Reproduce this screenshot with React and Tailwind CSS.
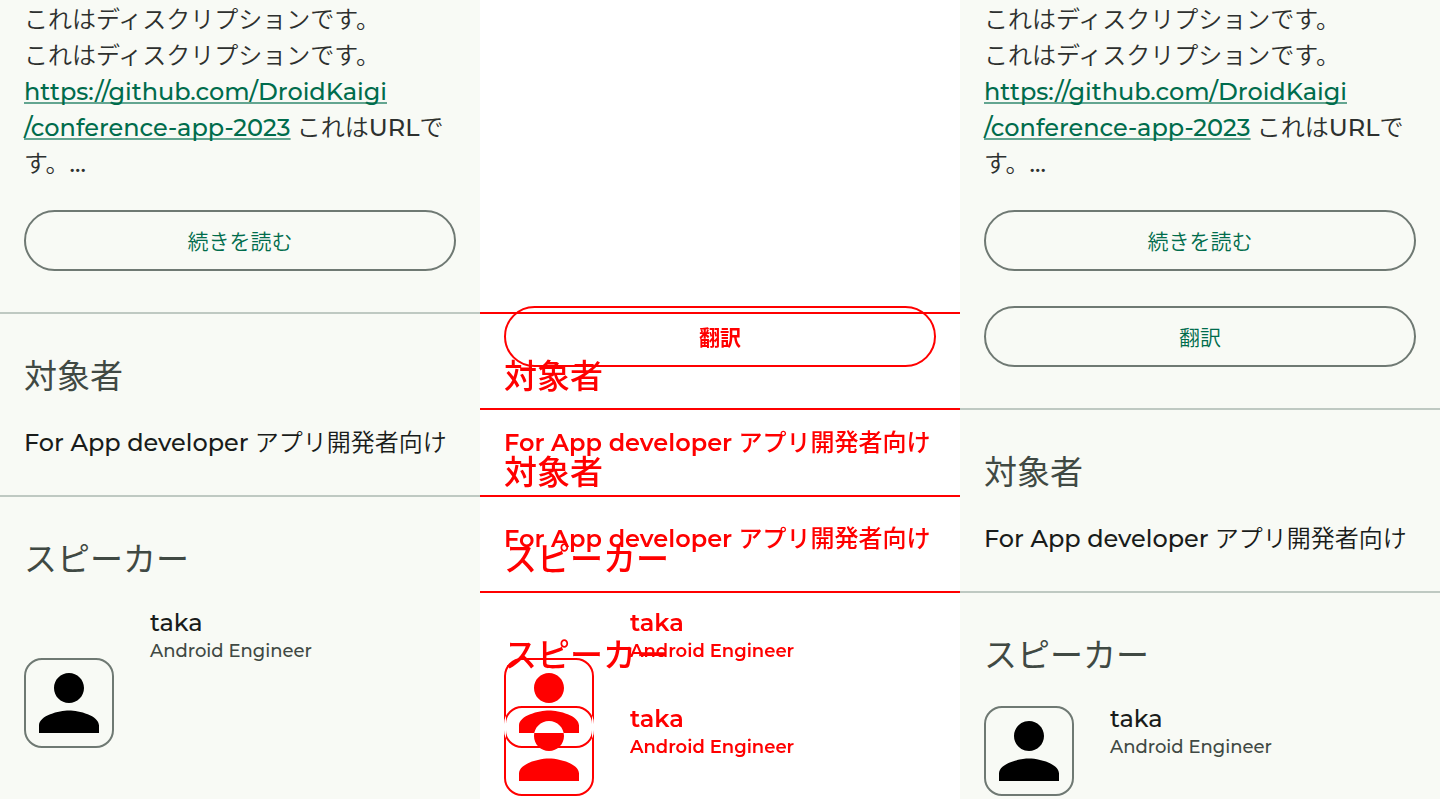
import React from "react";

const tones = {
  normal: {
    divider: "border-[#bfc9c2]",
    title: "text-[#404943] font-normal",
    body: "text-[#191c1a] font-[350]",
    sub: "text-[#404943] font-medium",
    latin: "font-medium",
    button: "border-[#6f7973] text-[#006c4c] font-[350]",
    avatar: "border-[#6f7973] text-black",
  },
  red: {
    divider: "border-[#ff0000]",
    title: "text-[#ff0000] font-medium",
    body: "text-[#ff0000] font-medium",
    sub: "text-[#ff0000] font-semibold",
    latin: "font-semibold",
    button: "border-[#ff0000] text-[#ff0000] font-bold",
    avatar:
      "relative border-[#ff0000] text-[#ff0000] after:absolute after:inset-x-4 after:-bottom-0.5 after:z-10 after:h-0.5 after:bg-[#ff0000]",
  },
};

// Cyan in difference mode: red over white, white over red.
const invertedAvatar = "border-[#00ffff] text-[#00ffff] mix-blend-difference";

function PillButton({ tone, children }) {
  return (
    <button
      type="button"
      className={`flex h-[61px] w-full items-center justify-center rounded-full border-2 pt-0.5 text-[21px] ${tones[tone].button}`}
    >
      {children}
    </button>
  );
}

function Description() {
  return (
    <p className="pt-0.5 text-2xl font-[350] leading-9 text-[#2d302e]">
      これはディスクリプションです。
      <br />
      これはディスクリプションです。
      <br />
      <a
        href="https://github.com/DroidKaigi/conference-app-2023"
        className="font-medium text-[#006c4c] underline decoration-[#006c4c]/60 decoration-2 underline-offset-2 [text-decoration-skip-ink:none]"
      >
        https://github.com/DroidKaigi
        <br />
        /conference-app-2023
      </a>{" "}
      これは<span className="font-medium">URL</span>で
      <br />
      す。<span className="font-medium">...</span>
    </p>
  );
}

function Audience({ tone }) {
  return (
    <section className={`border-t-2 px-6 pb-[34px] pt-[38px] ${tones[tone].divider}`}>
      <h2 className={`text-[33px] leading-[48px] ${tones[tone].title}`}>対象者</h2>
      <p className={`mt-[25px] whitespace-nowrap text-2xl leading-9 ${tones[tone].body}`}>
        <span className={tones[tone].latin}>For App developer</span> アプリ開発者向け
      </p>
    </section>
  );
}

function Speakers({ tone, lowered, avatarClass }) {
  return (
    <section className={`border-t-2 px-6 pt-[38px] ${tones[tone].divider}`}>
      <h2 className={`text-[33px] leading-[48px] ${tones[tone].title}`}>スピーカー</h2>
      <div className="mt-[25px] flex items-start gap-9">
        <div
          className={`grid size-[90px] shrink-0 place-items-center rounded-[18px] border-2 ${
            lowered ? "mt-[50px]" : "mt-[2px]"
          } ${avatarClass || tones[tone].avatar}`}
        >
          <svg viewBox="4 4 16 16" className="size-[60px]" fill="currentColor" aria-hidden="true">
            <path d="M12 12c2.21 0 4-1.79 4-4s-1.79-4-4-4-4 1.79-4 4 1.79 4 4 4zm0 2c-2.67 0-8 1.34-8 4v2h16v-2c0-2.66-5.33-4-8-4z" />
          </svg>
        </div>
        <div>
          <p className={`text-2xl leading-[30px] ${tones[tone].body}`}>
            <span className={tones[tone].latin}>taka</span>
          </p>
          <p className={`text-lg leading-[26px] ${tones[tone].sub}`}>Android Engineer</p>
        </div>
      </div>
    </section>
  );
}

function SessionPanel({ translatable }) {
  return (
    <article className="bg-[#f8faf5]">
      <div className="px-6 pb-[41px]">
        <Description />
        <div className="mt-7 flex flex-col gap-[35px]">
          <PillButton tone="normal">続きを読む</PillButton>
          {translatable && <PillButton tone="normal">翻訳</PillButton>}
        </div>
      </div>
      <Audience tone="normal" />
      <Speakers tone="normal" lowered={!translatable} />
    </article>
  );
}

function DiffPanel() {
  return (
    <div className="isolate grid grid-cols-1 bg-white">
      <div className="col-start-1 row-start-1 pt-[312px]">
        <Audience tone="red" />
        <Speakers tone="red" lowered />
      </div>
      <div className="col-start-1 row-start-1 pt-[306px]">
        <div className="px-6 pb-[41px]">
          <PillButton tone="red">翻訳</PillButton>
        </div>
        <Audience tone="red" />
        <Speakers tone="red" avatarClass={invertedAvatar} />
      </div>
    </div>
  );
}

export default function App() {
  return (
    <main className="grid min-h-screen grid-cols-3 font-['Montserrat','Noto_Sans_CJK_JP',sans-serif]">
      <SessionPanel />
      <DiffPanel />
      <SessionPanel translatable />
    </main>
  );
}
